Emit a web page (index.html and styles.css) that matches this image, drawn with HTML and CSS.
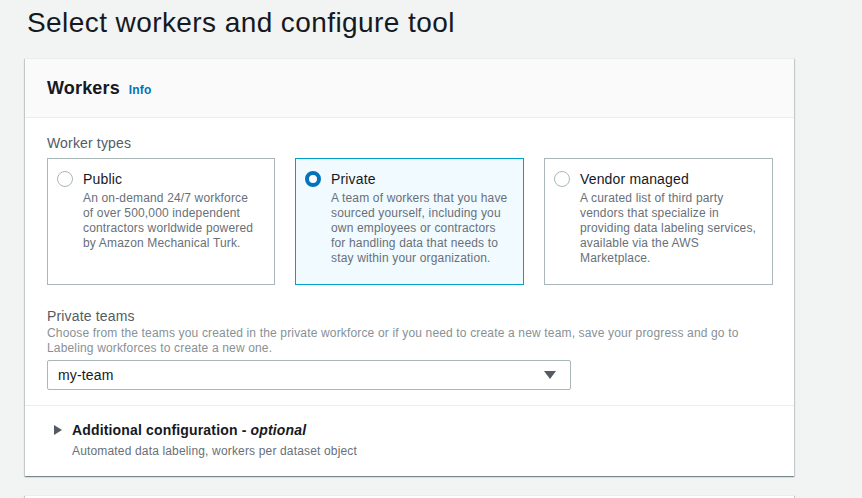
FILE: index.html
```html
<!DOCTYPE html>
<html lang="en">
<head>
<meta charset="utf-8">
<title>Select workers and configure tool</title>
<link rel="stylesheet" href="styles.css">
</head>
<body>
<main class="page">
  <h1 class="page-title">Select workers and configure tool</h1>

  <section class="card">
    <header class="card-header">
      <h2 class="card-title">Workers</h2>
      <a class="info-link" href="#">Info</a>
    </header>

    <div class="card-body">
      <div class="field-label">Worker types</div>
      <div class="tiles">
        <label class="tile">
          <span class="radio"></span>
          <span class="tile-text">
            <span class="tile-title">Public</span>
            <span class="tile-desc">An on-demand 24/7 workforce of over 500,000 independent contractors worldwide powered by Amazon Mechanical Turk.</span>
          </span>
        </label>
        <label class="tile tile-selected">
          <span class="radio radio-checked"></span>
          <span class="tile-text">
            <span class="tile-title">Private</span>
            <span class="tile-desc">A team of workers that you have sourced yourself, including you own employees or contractors for handling data that needs to stay within your organization.</span>
          </span>
        </label>
        <label class="tile">
          <span class="radio"></span>
          <span class="tile-text">
            <span class="tile-title">Vendor managed</span>
            <span class="tile-desc">A curated list of third party vendors that specialize in providing data labeling services, available via the AWS Marketplace.</span>
          </span>
        </label>
      </div>

      <div class="field-label field-label-teams">Private teams</div>
      <div class="field-desc">Choose from the teams you created in the private workforce or if you need to create a new team, save your progress and go to Labeling workforces to create a new one.</div>
      <div class="select">
        <span class="select-value">my-team</span>
        <svg class="select-caret" width="12" height="8" viewBox="0 0 12 8"><path d="M0 0 H12 L6 8 Z" fill="#545b64"/></svg>
      </div>
    </div>

    <div class="expander">
      <svg class="expander-caret" width="8" height="10" viewBox="0 0 8 10"><path d="M0 0 L8 5 L0 10 Z" fill="#545b64"/></svg>
      <div class="expander-text">
        <div class="expander-title">Additional configuration - <em>optional</em></div>
        <div class="expander-desc">Automated data labeling, workers per dataset object</div>
      </div>
    </div>
  </section>

  <section class="card card-next"></section>
</main>
</body>
</html>
```

FILE: styles.css
```css
* { box-sizing: border-box; }

html, body {
  margin: 0;
  padding: 0;
  background: #f2f3f3;
  font-family: "Liberation Sans", Arial, sans-serif;
  letter-spacing: 0.01em;
  color: #16191f;
}

.page {
  padding: 0 0 0 25px;
  width: 794px;
}

.page-title {
  margin: 0;
  padding: 5px 0 0 2px;
  height: 58px;
  font-size: 28px;
  line-height: 36px;
  font-weight: 400;
  letter-spacing: 0.015em;
  color: #16191f;
}

.card {
  background: #fff;
  border-top: 1px solid #eaeded;
  box-shadow: 0 1px 1px 0 rgba(0, 28, 36, 0.3), 1px 1px 1px 0 rgba(0, 28, 36, 0.15), -1px 1px 1px 0 rgba(0, 28, 36, 0.15);
  width: 769px;
}

.card-header {
  display: flex;
  align-items: baseline;
  gap: 9px;
  height: 59px;
  padding: 17px 21px 0 22px;
  background: #fafafa;
  border-bottom: 1px solid #eaeded;
}

.card-title {
  margin: 0;
  font-size: 18px;
  line-height: 24px;
  font-weight: 700;
}

.info-link {
  font-size: 12px;
  font-weight: 700;
  color: #0073bb;
  text-decoration: none;
}

.card-body {
  padding: 15px 21px 15px 22px;
  border-bottom: 1px solid #eaeded;
}

.field-label {
  font-size: 14px;
  line-height: 20px;
  color: #545b64;
  margin-bottom: 5px;
}

.tiles {
  display: grid;
  grid-template-columns: 228px 229px 229px;
  gap: 20px;
}

.tile {
  display: flex;
  gap: 10px;
  height: 127px;
  padding: 12px 15px 10px 9px;
  border: 1px solid #aab7b8;
  background: #fff;
}

.tile-selected {
  border-color: #00a1c9;
  background: #f1faff;
}

.radio {
  flex: none;
  width: 16px;
  height: 16px;
  border-radius: 50%;
  border: 1px solid #aab7b8;
  background: #fff;
}

.radio-checked {
  border: 4px solid #0073bb;
  background: #fff;
}

.tile-text {
  display: flex;
  flex-direction: column;
}

.tile-title {
  font-size: 14px;
  line-height: 17px;
  margin-bottom: 3px;
  color: #16191f;
}

.tile-desc {
  font-size: 12px;
  line-height: 15px;
  color: #687078;
}

.field-label-teams {
  margin-top: 21px;
  margin-bottom: 0;
  color: #545b64;
}

.field-desc {
  font-size: 12px;
  line-height: 15px;
  color: #879196;
  margin-bottom: 4px;
  max-width: 700px;
}

.select {
  display: flex;
  align-items: center;
  justify-content: space-between;
  width: 524px;
  height: 30px;
  padding: 0 14px 0 10px;
  border: 1px solid #aab7b8;
  border-radius: 2px;
  background: #fff;
}

.select-value {
  font-size: 14px;
  color: #16191f;
}

.expander {
  display: flex;
  align-items: flex-start;
  gap: 10px;
  height: 70px;
  padding: 16px 21px 0 29px;
}

.expander-caret {
  margin-top: 3px;
}

.expander-title {
  font-size: 14px;
  line-height: 17px;
  font-weight: 700;
  color: #16191f;
}

.expander-title em {
  font-weight: 700;
  font-style: italic;
}

.expander-desc {
  margin-top: 5px;
  font-size: 12px;
  line-height: 15px;
  color: #687078;
}

.card-next {
  margin-top: 19px;
  height: 40px;
}
```
